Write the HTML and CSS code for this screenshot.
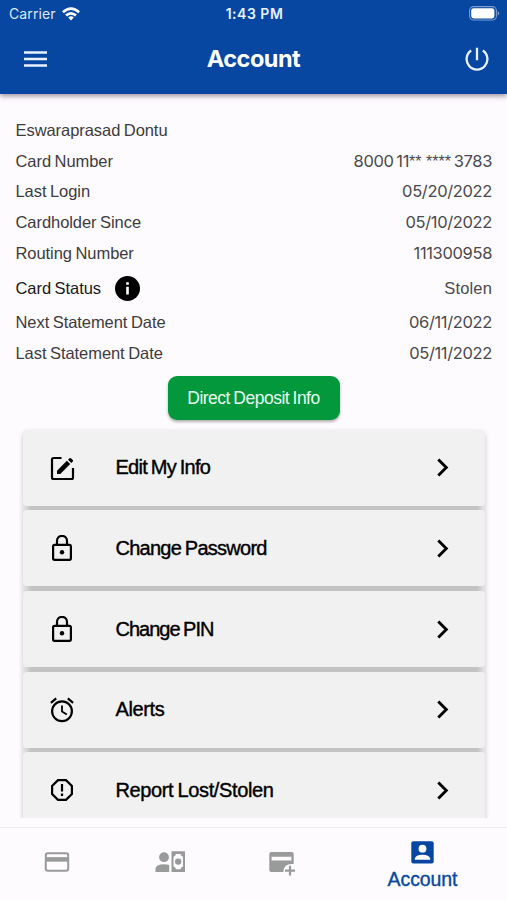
FILE: index.html
```html
<!DOCTYPE html>
<html lang="en">
<head>
<meta charset="utf-8">
<title>Account</title>
<link rel="stylesheet" href="styles.css">
</head>
<body>
<div class="app">
  <header class="header">
    <div class="status">
      <div class="carrier"><span>Carrier</span>
        <svg class="wifi" viewBox="0 0 18 14"><path d="M0 4.3Q9-3.6 18 4.3L16.2 6.2Q9 0 1.8 6.2ZM3.1 7.5Q9 2.4 14.9 7.5L13 9.4Q9 6 5 9.4ZM6.2 10.5Q9 8.2 11.8 10.5L9 13.5Z" fill="#fff"/></svg>
      </div>
      <span class="time">1:43 PM</span>
      <svg class="battery" viewBox="0 0 31 15"><rect x=".6" y=".6" width="26.8" height="13.4" rx="4" fill="none" stroke="#7d9bcd" stroke-width="1.1"/><rect x="2.2" y="2.2" width="23.2" height="10.2" rx="2.4" fill="#fff"/><path d="M28.7 5Q31.6 7.3 28.7 9.7Z" fill="#7d9bcd"/></svg>
    </div>
    <div class="toolbar">
      <svg class="menu" viewBox="0 0 23 16"><path d="M0 1.5h23M0 8h23M0 14.5h23" stroke="#e9f1ff" stroke-width="2.4"/></svg>
      <h1 class="title">Account</h1>
      <svg class="power" viewBox="0 0 24 24"><path d="M12 .8v12.5M6.2 3.5A10.4 10.4 0 1 0 17.8 3.5" fill="none" stroke="#e9f1ff" stroke-width="2.3"/></svg>
    </div>
  </header>

  <main class="content">
    <dl class="info">
      <div class="row"><dt>Eswaraprasad Dontu</dt></div>
      <div class="row"><dt>Card Number</dt><dd class="card-no">8000 11<span class="mask">** ****</span> 3783</dd></div>
      <div class="row"><dt>Last Login</dt><dd>05/20/2022</dd></div>
      <div class="row"><dt>Cardholder Since</dt><dd>05/10/2022</dd></div>
      <div class="row"><dt>Routing Number</dt><dd>111300958</dd></div>
      <div class="row row-status"><dt>Card Status</dt>
        <svg class="info-icon" viewBox="0 0 24 24"><circle cx="12" cy="12" r="12"/><path d="M12 6v2.500M12 10.200v7.500" stroke="#fff" stroke-width="2.500"/></svg>
        <dd class="word">Stolen</dd></div>
      <div class="row"><dt>Next Statement Date</dt><dd>06/11/2022</dd></div>
      <div class="row"><dt>Last Statement Date</dt><dd>05/11/2022</dd></div>
    </dl>
    <button class="deposit"><span>Direct Deposit Info</span></button>
    <nav class="list">
      <a class="item">
        <svg class="icon" viewBox="0 0 26 26"><path d="M12.500 3H4.500Q3 3 3 4.500V22.500Q3 24 4.500 24H22.500Q24 24 24 22.500V13" fill="none" stroke="#000" stroke-width="2.200"/><path d="M8 15.700L17.900 5.800L21.200 9.100L11.300 19H8ZM19 4.700L20.500 3.200Q21.200 2.600 21.900 3.200L23.800 5.100Q24.400 5.800 23.800 6.500L22.300 8Z"/></svg>
        <span class="label">Edit My Info</span><svg class="chev" viewBox="0 0 12 19"><path d="M1.300 1.500L9.300 9.500L1.300 17.500" fill="none" stroke="#000" stroke-width="2.900"/></svg></a>
      <a class="item">
        <svg class="icon" viewBox="0 0 26 26"><rect x="4.100" y="9.800" width="17.800" height="15" rx="1.500" fill="none" stroke="#000" stroke-width="2.200"/><path d="M8 9.500V5.900a5 5 0 0 1 10 0v3.600" fill="none" stroke="#000" stroke-width="2.200"/><circle cx="13" cy="17.300" r="2.200"/></svg>
        <span class="label">Change Password</span><svg class="chev" viewBox="0 0 12 19"><path d="M1.300 1.500L9.300 9.500L1.300 17.500" fill="none" stroke="#000" stroke-width="2.900"/></svg></a>
      <a class="item">
        <svg class="icon" viewBox="0 0 26 26"><rect x="4.100" y="9.800" width="17.800" height="15" rx="1.500" fill="none" stroke="#000" stroke-width="2.200"/><path d="M8 9.500V5.900a5 5 0 0 1 10 0v3.600" fill="none" stroke="#000" stroke-width="2.200"/><circle cx="13" cy="17.300" r="2.200"/></svg>
        <span class="label tight">Change PIN</span><svg class="chev" viewBox="0 0 12 19"><path d="M1.300 1.500L9.300 9.500L1.300 17.500" fill="none" stroke="#000" stroke-width="2.900"/></svg></a>
      <a class="item">
        <svg class="icon" viewBox="0 0 26 26"><g fill="none" stroke="#000"><circle cx="13" cy="14.200" r="9.900" stroke-width="2.200"/><path d="M1.900 5.800L7.200 1.400M24.100 5.800L18.800 1.400" stroke-width="2.200"/><path d="M13 8.500V14.600L17.800 17.500" stroke-width="1.800"/></g></svg>
        <span class="label loose">Alerts</span><svg class="chev" viewBox="0 0 12 19"><path d="M1.300 1.500L9.300 9.500L1.300 17.500" fill="none" stroke="#000" stroke-width="2.900"/></svg></a>
      <a class="item">
        <svg class="icon" viewBox="0 0 26 26"><path d="M9 3.100H17L22.900 9V17L17 22.900H9L3.100 17V9Z" fill="none" stroke="#000" stroke-width="2.200"/><path d="M13 7v7.600M13 16.600v2.400" stroke="#000" stroke-width="2.200"/></svg>
        <span class="label loose">Report Lost/Stolen</span><svg class="chev" viewBox="0 0 12 19"><path d="M1.300 1.500L9.300 9.500L1.300 17.500" fill="none" stroke="#000" stroke-width="2.900"/></svg></a>
    </nav>
  </main>

  <footer class="tabs">
    <a class="tab"><svg width="26" height="20" viewBox="0 0 26 20"><rect x="1.800" y="1.300" width="22.400" height="17.400" rx="2" fill="none" stroke="#999b9a" stroke-width="2"/><path d="M1 7.400h24" stroke="#999b9a" stroke-width="4.500"/></svg></a>
    <a class="tab"><svg width="30" height="22" viewBox="0 0 30 22"><g fill="#999b9a"><circle cx="9" cy="6.200" r="4.900"/><path d="M.5 21V18Q.500 13.200 9 13.200Q11.800 13.200 14.200 14V21Z"/><path fill-rule="evenodd" d="M16.500 .200H30V21H16.500ZM21 3Q20.500 5 18.500 5.800V15.400Q20.500 16.200 21 18.200H25.500Q26 16.200 28 15.400V5.800Q26 5 25.500 3Z"/><circle cx="23.200" cy="10.600" r="3.200"/></g></svg></a>
    <a class="tab"><svg width="26" height="24" viewBox="0 0 26 24"><path fill="#999b9a" fill-rule="evenodd" d="M2.300 0H22.700Q24.700 0 24.700 2V12Q14.500 11 14.500 20H2.300Q.300 20 .300 18V2Q.300 0 2.300 0ZM2.600 4.800V8.400H22.400V4.800Z"/><path d="M21 13.700V23.500M16 18.600H26" stroke="#999b9a" stroke-width="2.200"/></svg></a>
    <a class="tab active"><svg width="23" height="23" viewBox="0 0 23 23"><rect x=".300" y=".300" width="22.400" height="22.200" rx="2" fill="#0747a1"/><circle cx="11.500" cy="7.700" r="3.900" fill="#fdfbfe"/><path d="M3.800 18.800V17.700Q4.600 13.700 11.500 13.700T19.200 17.700V18.800Z" fill="#fdfbfe"/></svg><span>Account</span></a>
  </footer>
</div>
</body>
</html>
```
FILE: styles.css
```css
* { box-sizing: border-box; }
body { margin: 0; background: #fdfbfe; font-family: "Liberation Sans", sans-serif; }
svg { display: block; flex: none; }
.app { height: 900px; display: flex; flex-direction: column; overflow: hidden; }
.header { height: 94px; flex: none; background: #0747a1; color: #fff; box-shadow: 0 2px 5px rgba(60,40,60,.5); z-index: 1; }
.status { height: 27px; display: grid; grid-template-columns: 1fr auto 1fr; align-items: center; padding: 0 7px 0 9px; }
.carrier { display: flex; align-items: center; gap: 6px; font: 400 14px/18px Inter, sans-serif; letter-spacing: .12px; color: #dce7fa; }
.wifi { width: 18px; height: 14px; }
.time { font: 600 14px/18px Inter, sans-serif; letter-spacing: .5px; color: #e9f1ff; }
.battery { width: 31px; height: 15px; justify-self: end; }
.toolbar { height: 64px; display: grid; grid-template-columns: 1fr auto 1fr; align-items: center; padding: 0 18px 0 24px; }
.menu { width: 23px; height: 16px; }
.title { margin: 0 6px 0 0; font: 700 23.500px/30px Inter, sans-serif; letter-spacing: -.5px; }
.power { width: 24px; height: 24px; justify-self: end; }
.content { height: 724px; flex: none; overflow: hidden; padding-top: 21.500px; display: flex; flex-direction: column; }
.info { margin: 0; padding: 0 15px 0 15.500px; color: #3d3c40; }
.row { height: 30.600px; display: flex; align-items: center; white-space: nowrap; }
dt { font-size: 16.500px; letter-spacing: -.06px; word-spacing: -1px; }
dd { margin: 0 0 0 auto; padding-bottom: 1px; font: 400 16.500px/20px Inter, sans-serif; letter-spacing: -.35px; color: #4a494d; }
.card-no { letter-spacing: -.35px; word-spacing: -1.500px; }
.mask { font: 400 16px/16px "Liberation Sans", sans-serif; letter-spacing: 0; word-spacing: 0; }
.word { padding-bottom: 0; font: 400 16.500px/20px "Liberation Sans", sans-serif; letter-spacing: .15px; }
.row-status { height: 39.200px; }
.row-status dt { color: #1b1a1d; }
.info-icon { width: 25px; height: 25px; margin-left: 14.500px; }
.deposit { align-self: center; width: 172px; height: 44px; margin: 7px 0 10px; padding: 0; flex: none; border: 0; border-radius: 9px; background: #03983c; color: #e6fff0; font: 400 17.500px/20px "Liberation Sans", sans-serif; letter-spacing: -.5px; word-spacing: -1px; box-shadow: 0 2px 3px rgba(0,0,0,.3); }
.list { margin: 0 22px 0 23px; display: flex; flex-direction: column; gap: 4.600px; background: linear-gradient(90deg, #e6e6e6, #c3c3c3 8px, #c3c3c3 454px, #e6e6e6); border-radius: 5px; box-shadow: 0 2px 5px rgba(0,0,0,.22); }
.item { height: 76px; flex: none; display: flex; align-items: center; padding: 0 36px 0 26px; background: #f1f1f1; border-radius: 4px; }
.icon { width: 26px; height: 26px; }
.label { flex: 1; margin-left: 40.500px; font-size: 20px; color: #000; letter-spacing: -.75px; word-spacing: -1px; -webkit-text-stroke: .4px #000; white-space: nowrap; }
.tight { letter-spacing: -1px; }
.loose { letter-spacing: -.37px; }
.chev { width: 12px; height: 19px; }
.tabs { margin-top: 9px; height: 73px; flex: none; border-top: 1px solid #ececee; display: grid; grid-template-columns: 114px 112px 112px 169px; }
.tab { display: flex; flex-direction: column; align-items: center; padding-top: 24px; }
.tab:nth-child(2) { padding-top: 23px; }
.tab.active { padding-top: 13px; color: #0747a1; font-size: 19.500px; line-height: 22px; letter-spacing: -.1px; gap: 4px; -webkit-text-stroke: .35px #0747a1; }
```
